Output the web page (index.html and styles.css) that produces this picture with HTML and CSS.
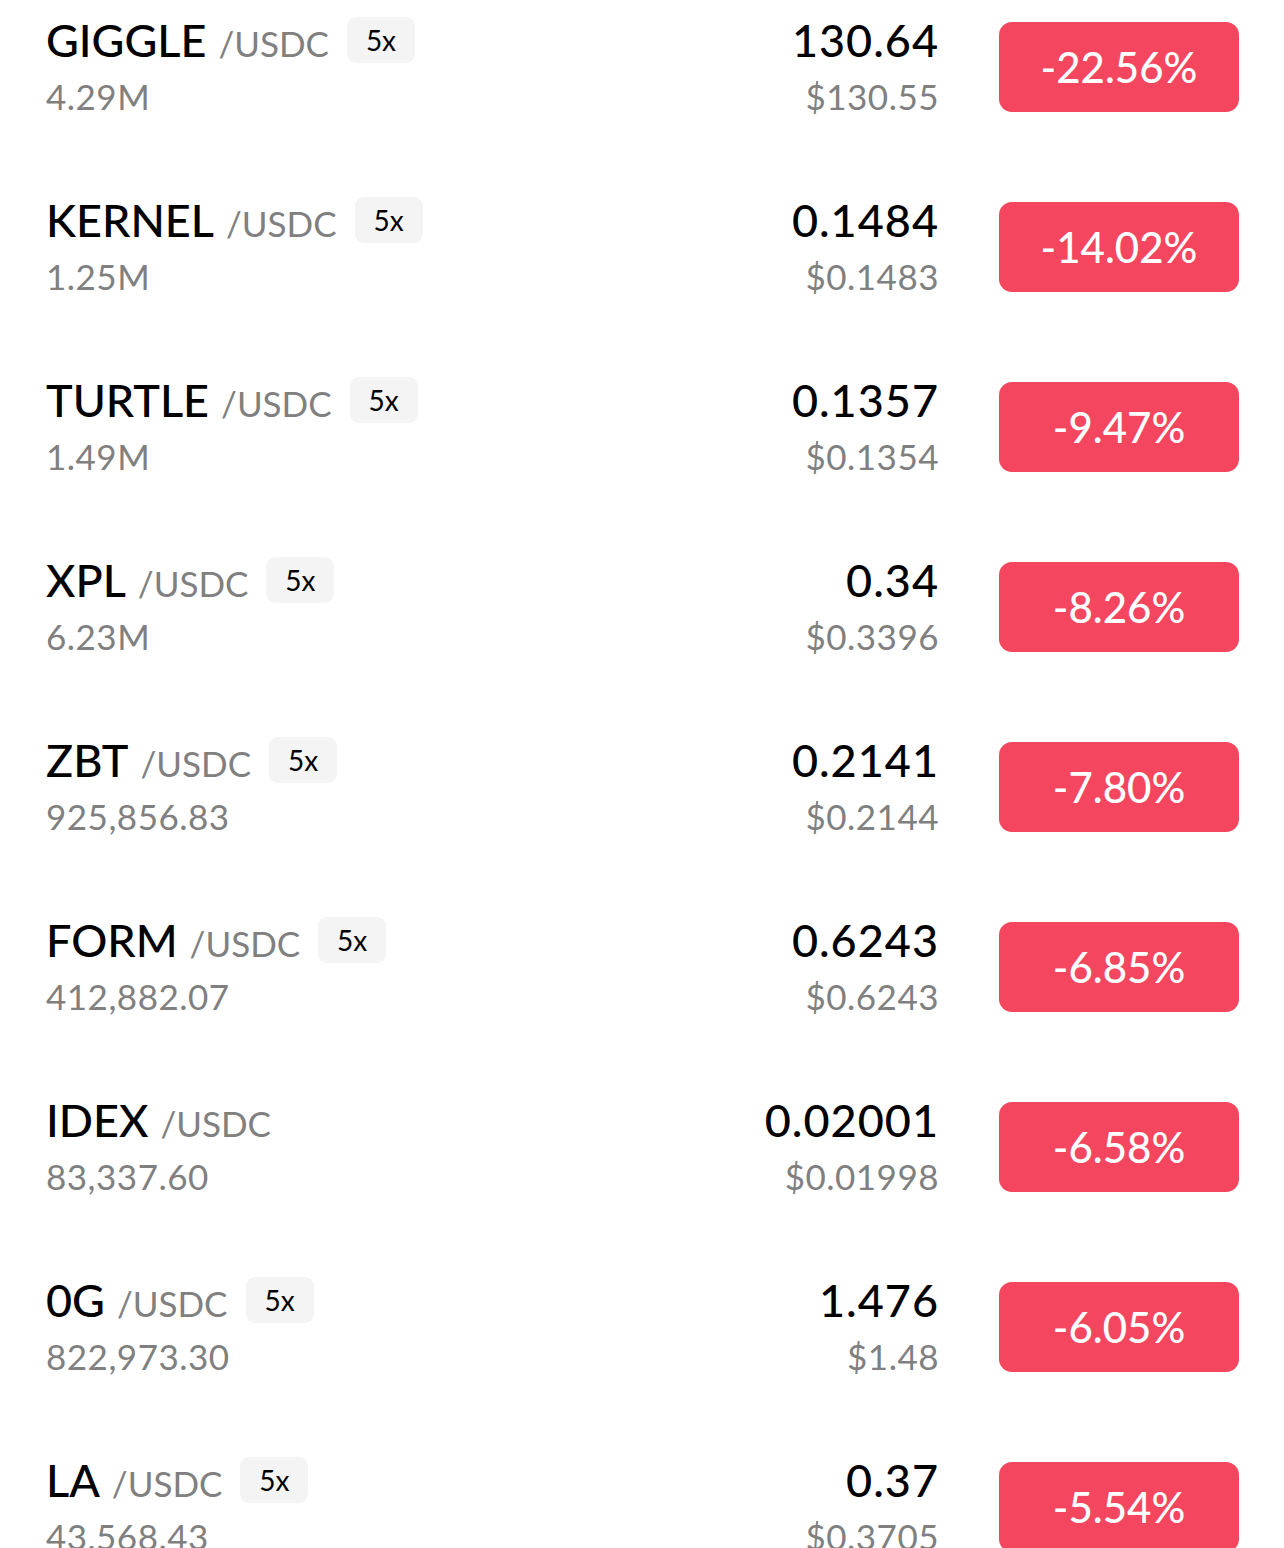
FILE: index.html
```html
<!DOCTYPE html>
<html>
<head>
<meta charset="utf-8">
<link rel="stylesheet" href="styles.css">
</head>
<body>
<div class="list">
  <div class="row">
    <div class="pair">
      <div class="name"><span class="base">GIGGLE</span><span class="quote">/USDC</span><span class="lev">5x</span></div>
      <div class="vol">4.29M</div>
    </div>
    <div class="price"><div class="last">130.64</div><div class="usd">$130.55</div></div>
    <div class="change">-22.56%</div>
  </div>
  <div class="row">
    <div class="pair">
      <div class="name"><span class="base">KERNEL</span><span class="quote">/USDC</span><span class="lev">5x</span></div>
      <div class="vol">1.25M</div>
    </div>
    <div class="price"><div class="last">0.1484</div><div class="usd">$0.1483</div></div>
    <div class="change">-14.02%</div>
  </div>
  <div class="row">
    <div class="pair">
      <div class="name"><span class="base">TURTLE</span><span class="quote">/USDC</span><span class="lev">5x</span></div>
      <div class="vol">1.49M</div>
    </div>
    <div class="price"><div class="last">0.1357</div><div class="usd">$0.1354</div></div>
    <div class="change">-9.47%</div>
  </div>
  <div class="row">
    <div class="pair">
      <div class="name"><span class="base">XPL</span><span class="quote">/USDC</span><span class="lev">5x</span></div>
      <div class="vol">6.23M</div>
    </div>
    <div class="price"><div class="last">0.34</div><div class="usd">$0.3396</div></div>
    <div class="change">-8.26%</div>
  </div>
  <div class="row">
    <div class="pair">
      <div class="name"><span class="base">ZBT</span><span class="quote">/USDC</span><span class="lev">5x</span></div>
      <div class="vol">925,856.83</div>
    </div>
    <div class="price"><div class="last">0.2141</div><div class="usd">$0.2144</div></div>
    <div class="change">-7.80%</div>
  </div>
  <div class="row">
    <div class="pair">
      <div class="name"><span class="base">FORM</span><span class="quote">/USDC</span><span class="lev">5x</span></div>
      <div class="vol">412,882.07</div>
    </div>
    <div class="price"><div class="last">0.6243</div><div class="usd">$0.6243</div></div>
    <div class="change">-6.85%</div>
  </div>
  <div class="row">
    <div class="pair">
      <div class="name"><span class="base">IDEX</span><span class="quote">/USDC</span></div>
      <div class="vol">83,337.60</div>
    </div>
    <div class="price"><div class="last">0.02001</div><div class="usd">$0.01998</div></div>
    <div class="change">-6.58%</div>
  </div>
  <div class="row">
    <div class="pair">
      <div class="name"><span class="base">0G</span><span class="quote">/USDC</span><span class="lev">5x</span></div>
      <div class="vol">822,973.30</div>
    </div>
    <div class="price"><div class="last">1.476</div><div class="usd">$1.48</div></div>
    <div class="change">-6.05%</div>
  </div>
  <div class="row">
    <div class="pair">
      <div class="name"><span class="base">LA</span><span class="quote">/USDC</span><span class="lev">5x</span></div>
      <div class="vol">43,568.43</div>
    </div>
    <div class="price"><div class="last">0.37</div><div class="usd">$0.3705</div></div>
    <div class="change">-5.54%</div>
  </div>
</div>
</body>
</html>
```
FILE: styles.css
```css
html, body {
  margin: 0;
  padding: 0;
  background: #ffffff;
}
body {
  font-family: Lato, "Noto Sans", sans-serif;
  overflow: hidden;
}
.list {
  display: flex;
  flex-direction: column;
}
.row {
  display: flex;
  align-items: flex-start;
  height: 180px;
  padding: 0 45px 0 46px;
}
.pair {
  flex: 1;
  padding-top: 12px;
}
.name {
  display: flex;
  align-items: center;
  height: 56px;
}
.base {
  font-size: 45px;
  font-weight: 500;
  color: #000000;
  line-height: 56px;
}
.quote {
  font-size: 35px;
  color: #808080;
  margin-left: 12px;
  line-height: 56px;
  padding-top: 6px;
}
.lev {
  margin-left: 18px;
  width: 68px;
  height: 46px;
  border-radius: 9px;
  background: #f4f4f4;
  color: #000;
  font-size: 28px;
  display: flex;
  align-items: center;
  justify-content: center;
}
.vol {
  font-size: 35px;
  color: #808080;
  line-height: 56px;
  letter-spacing: 0.5px;
}
.price {
  text-align: right;
  padding-top: 12px;
}
.last {
  font-size: 45px;
  font-weight: 500;
  color: #000;
  line-height: 56px;
  letter-spacing: 1px;
}
.usd {
  font-size: 35px;
  color: #808080;
  line-height: 56px;
  letter-spacing: 0.5px;
}
.change {
  margin-left: 60px;
  margin-top: 22px;
  width: 240px;
  height: 90px;
  border-radius: 13px;
  background: #f5465f;
  color: #fff;
  font-size: 42px;
  font-weight: 500;
  display: flex;
  align-items: center;
  justify-content: center;
}
```
